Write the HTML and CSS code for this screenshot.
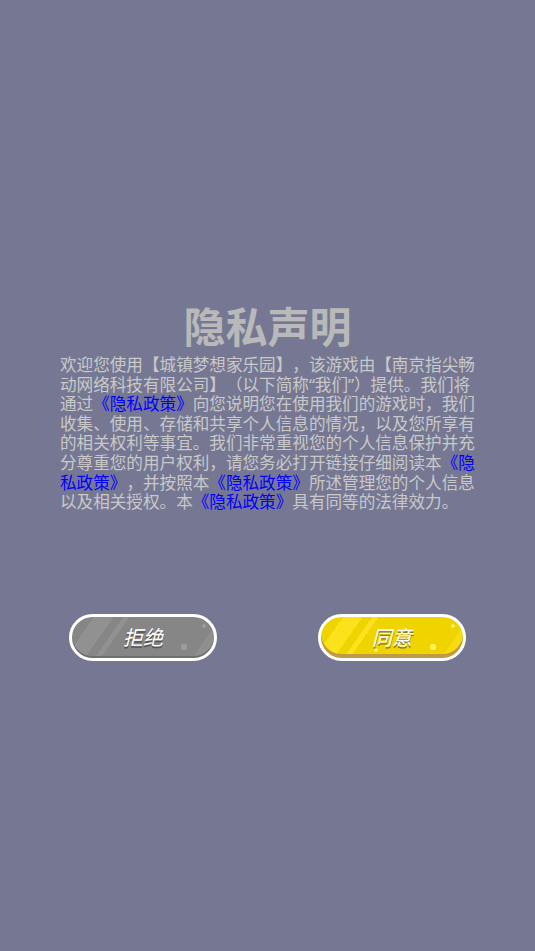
FILE: index.html
```html
<!DOCTYPE html>
<html lang="zh-CN">
<head>
    <meta charset="UTF-8">
    <meta name="viewport" content="width=device-width, initial-scale=1.0">
    <title>隐私声明</title>
    <link rel="stylesheet" href="styles.css">
</head>
<body>
    <div class="container">
        <h1>隐私声明</h1>
        <p class="notice">欢迎您使用【城镇梦想家乐园】，该游戏由【南京指尖畅动网络科技有限公司】（以下简称“我们”）提供。我们将通过<a href="#">《隐私政策》</a>向您说明您在使用我们的游戏时，我们收集、使用、存储和共享个人信息的情况，以及您所享有的相关权利等事宜。我们非常重视您的个人信息保护并充分尊重您的用户权利，请您务必打开链接仔细阅读本<a href="#">《隐私政策》</a>，并按照本<a href="#">《隐私政策》</a>所述管理您的个人信息以及相关授权。本<a href="#">《隐私政策》</a>具有同等的法律效力。</p>
        <div class="buttons">
            <button class="btn btn-reject"><span>拒绝</span></button>
            <button class="btn btn-agree"><span>同意</span></button>
        </div>
    </div>
</body>
</html>
```

FILE: styles.css
```css
body {
    margin: 0;
    padding: 0;
    background-color: #767893;
    font-family: "Noto Sans CJK SC", "Noto Sans", sans-serif;
    height: 951px;
}
.container {
    padding-top: 300px;
}
h1 {
    margin: 0;
    text-align: center;
    font-size: 42px;
    line-height: 50px;
    font-weight: bold;
    color: #b9b9b9;
}
.notice {
    width: 416px;
    margin: 5px 0 0 60px;
    font-family: "Noto Sans", "Noto Sans CJK SC", sans-serif;
    font-size: 16.6px;
    line-height: 19.6px;
    color: #c9c9c9;
    text-spacing-trim: space-all;
}
.notice a {
    color: #0000ff;
    text-decoration: none;
}
.buttons {
    display: flex;
    justify-content: space-between;
    padding: 0 69px;
    margin-top: 102px;
}
.btn {
    position: relative;
    width: 148px;
    height: 47px;
    padding: 0;
    border: 3px solid #ffffff;
    border-radius: 24px;
    box-sizing: border-box;
    overflow: hidden;
    font-size: 20px;
    font-style: italic;
    color: #ffffff;
    text-shadow: 0 2px 0 #555555;
    cursor: pointer;
}
.btn span {
    position: relative;
    top: -1px;
}
.btn-reject {
    background:
        radial-gradient(circle at 112px 30px, #9c9c9c 3px, transparent 3.5px),
        radial-gradient(circle at 132px 9px, #9c9c9c 1.5px, transparent 2px),
        linear-gradient(125deg, transparent 0 18px, #919191 18px 34px, transparent 34px 42px, #919191 42px 47px, transparent 47px),
        linear-gradient(125deg, transparent 0 122px, #8f8f8f 122px 138px, transparent 138px),
        #868686;
    box-shadow: inset 0 -2px 0 #6f6f6f;
}
.btn-agree {
    background:
        radial-gradient(circle at 112px 30px, #fff25a 3px, transparent 3.5px),
        radial-gradient(circle at 132px 9px, #fff25a 1.5px, transparent 2px),
        radial-gradient(circle at 55px 33px, #fff25a 1.5px, transparent 2px),
        linear-gradient(125deg, transparent 0 18px, #fbe21a 18px 34px, transparent 34px 42px, #fbe21a 42px 47px, transparent 47px),
        linear-gradient(125deg, transparent 0 122px, #f6dd10 122px 138px, transparent 138px),
        #f0d400;
    box-shadow: inset 0 -4px 0 #c29a46;
    text-shadow: 0 2px 0 #8a7a30;
}
```
